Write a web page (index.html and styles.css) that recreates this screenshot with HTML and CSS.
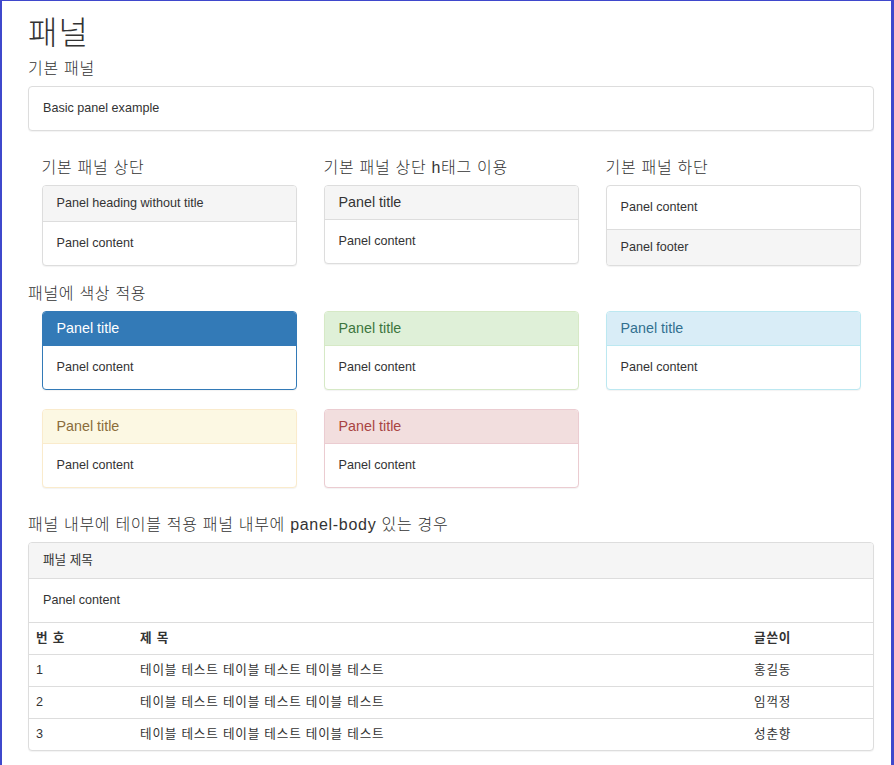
FILE: index.html
```html
<!DOCTYPE html>
<html lang="ko">
<head>
  <meta charset="UTF-8" />
  <meta name="viewport" content="width=device-width, initial-scale=1" />
  <title>패널</title>
  <link rel="stylesheet" href="styles.css">
</head>
<body>
  <div class="frame">
    <h1 class="page-title">패널</h1>

    <h4 class="section-title">기본 패널</h4>
    <div class="panel panel-default">
      <div class="panel-body">Basic panel example</div>
    </div>

    <div class="row">
      <div class="col">
        <h4 class="section-title">기본 패널 상단</h4>
        <div class="panel panel-default">
          <div class="panel-heading">Panel heading without title</div>
          <div class="panel-body">Panel content</div>
        </div>
      </div>
      <div class="col">
        <h4 class="section-title">기본 패널 상단 h태그 이용</h4>
        <div class="panel panel-default">
          <div class="panel-heading"><h3 class="panel-title">Panel title</h3></div>
          <div class="panel-body">Panel content</div>
        </div>
      </div>
      <div class="col">
        <h4 class="section-title">기본 패널 하단</h4>
        <div class="panel panel-default">
          <div class="panel-body">Panel content</div>
          <div class="panel-footer">Panel footer</div>
        </div>
      </div>
    </div>

    <h4 class="section-title flush">패널에 색상 적용</h4>
    <div class="row">
      <div class="col">
        <div class="panel panel-primary">
          <div class="panel-heading"><h3 class="panel-title">Panel title</h3></div>
          <div class="panel-body">Panel content</div>
        </div>
      </div>
      <div class="col">
        <div class="panel panel-success">
          <div class="panel-heading"><h3 class="panel-title">Panel title</h3></div>
          <div class="panel-body">Panel content</div>
        </div>
      </div>
      <div class="col">
        <div class="panel panel-info">
          <div class="panel-heading"><h3 class="panel-title">Panel title</h3></div>
          <div class="panel-body">Panel content</div>
        </div>
      </div>
      <div class="col">
        <div class="panel panel-warning">
          <div class="panel-heading"><h3 class="panel-title">Panel title</h3></div>
          <div class="panel-body">Panel content</div>
        </div>
      </div>
      <div class="col">
        <div class="panel panel-danger">
          <div class="panel-heading"><h3 class="panel-title">Panel title</h3></div>
          <div class="panel-body">Panel content</div>
        </div>
      </div>
    </div>

    <h4 class="section-title">패널 내부에 테이블 적용 패널 내부에 panel-body 있는 경우</h4>
    <div class="panel panel-default">
      <div class="panel-heading">패널 제목</div>
      <div class="panel-body">Panel content</div>
      <table class="panel-table">
        <colgroup>
          <col class="col-no">
          <col>
          <col class="col-writer">
        </colgroup>
        <thead>
          <tr><th>번 호</th><th>제 목</th><th>글쓴이</th></tr>
        </thead>
        <tbody>
          <tr><td>1</td><td>테이블 테스트 테이블 테스트 테이블 테스트</td><td>홍길동</td></tr>
          <tr><td>2</td><td>테이블 테스트 테이블 테스트 테이블 테스트</td><td>임꺽정</td></tr>
          <tr><td>3</td><td>테이블 테스트 테이블 테스트 테이블 테스트</td><td>성춘향</td></tr>
        </tbody>
      </table>
    </div>
  </div>
</body>
</html>
```

FILE: styles.css
```css
/* Reset and base */
*, *::before, *::after {
  box-sizing: border-box;
}
html, body {
  margin: 0;
  height: 100%;
}
body {
  font-family: "Liberation Sans", "Noto Sans CJK KR", sans-serif;
  font-size: 12.6px;
  line-height: 17px;
  color: #333;
  background: #fff;
}

/* outer window frame */
.frame {
  min-height: 100vh;
  border: solid #3f48cc;
  border-width: 1px 3px 2px 2px;
  padding: 0 17px 0 26px;
  overflow: hidden;
}

.page-title {
  margin: 14px 0 0;
  font-size: 32px;
  line-height: 36px;
  font-weight: 300;
  letter-spacing: 1px;
}

.section-title {
  margin: 9px 0 8px;
  font-size: 16px;
  line-height: 18px;
  font-weight: 300;
  letter-spacing: 0.7px;
}
.section-title.flush {
  margin-top: 0;
  margin-bottom: 8px;
}

/* GRID */
.row {
  display: grid;
  grid-template-columns: repeat(3, 1fr);
  column-gap: 27px;
  padding: 0 13.5px;
}

/* PANELS */
.panel {
  margin-bottom: 19px;
  background: #fff;
  border: 1px solid #ddd;
  border-radius: 4px;
  box-shadow: 0 1px 1px rgba(0, 0, 0, 0.05);
  overflow: hidden;
}
.panel-body {
  padding: 13px 14px;
}
.panel-heading {
  padding: 9px 14px;
  border-bottom: 1px solid #ddd;
}
.panel-title {
  margin: 0;
  font-size: 14.3px;
  line-height: 15px;
  font-weight: normal;
  color: inherit;
}
.panel-footer {
  padding: 9px 14px;
  background: #f5f5f5;
  border-top: 1px solid #ddd;
}

.panel-default > .panel-heading {
  background: #f5f5f5;
  color: #333;
}
.panel-primary {
  border-color: #337ab7;
}
.panel-primary > .panel-heading {
  background: #337ab7;
  border-color: #337ab7;
  color: #fff;
}
.panel-success {
  border-color: #d6e9c6;
}
.panel-success > .panel-heading {
  background: #dff0d8;
  border-color: #d6e9c6;
  color: #3c763d;
}
.panel-info {
  border-color: #bce8f1;
}
.panel-info > .panel-heading {
  background: #d9edf7;
  border-color: #bce8f1;
  color: #31708f;
}
.panel-warning {
  border-color: #faebcc;
}
.panel-warning > .panel-heading {
  background: #fcf8e3;
  border-color: #faebcc;
  color: #8a6d3b;
}
.panel-danger {
  border-color: #ebccd1;
}
.panel-danger > .panel-heading {
  background: #f2dede;
  border-color: #ebccd1;
  color: #a94442;
}

/* TABLE */
.panel-table {
  width: 100%;
  border-collapse: collapse;
  table-layout: fixed;
}
.col-no {
  width: 104px;
}
.col-writer {
  width: 126px;
}
.panel-table th,
.panel-table td {
  padding: 7px;
  line-height: 17px;
  text-align: left;
  border-top: 1px solid #ddd;
  letter-spacing: 0.8px;
}
.panel-table th {
  font-weight: bold;
}
```
